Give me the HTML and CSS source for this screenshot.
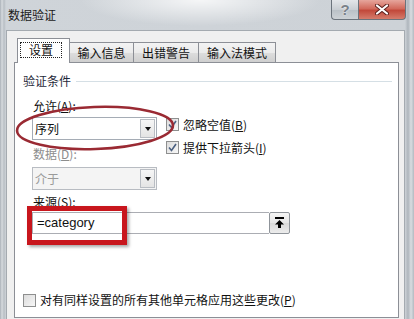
FILE: index.html
```html
<!DOCTYPE html>
<html lang="zh-CN">
<head>
  <meta charset="UTF-8" />
  <title>数据验证</title>
  <link rel="stylesheet" href="styles.css">
</head>
<body>
  <div class="window">
    <div class="titlebar">
      <span class="title">数据验证</span>
      <div class="caption-btns">
        <div class="cap help">?</div>
        <div class="cap close">
          <svg width="14" height="11" viewBox="0 0 14 11">
            <path d="M2 1.5 L12 9.5 M12 1.5 L2 9.5" stroke="#5a1f1c" stroke-width="4" stroke-linecap="round"/>
            <path d="M2 1.5 L12 9.5 M12 1.5 L2 9.5" stroke="#fff" stroke-width="2.2" stroke-linecap="round"/>
          </svg>
        </div>
      </div>
    </div>

    <div class="client">
      <div class="tabs">
        <div class="tab active"><span class="focus">设置</span></div>
        <div class="tab w2">输入信息</div>
        <div class="tab w3">出错警告</div>
        <div class="tab w4">输入法模式</div>
      </div>

      <div class="panel">
        <div class="group-title"><span>验证条件</span><i class="rule"></i></div>

        <div class="fields">
          <div class="top">
            <div class="left">
              <div class="label">允许(<u>A</u>):</div>
              <div class="combo">
                <span class="value">序列</span>
                <span class="drop"><i class="arrow"></i></span>
              </div>
              <div class="label disabled">数据(<u>D</u>):</div>
              <div class="combo off">
                <span class="value">介于</span>
                <span class="drop"><i class="arrow"></i></span>
              </div>
            </div>
            <div class="checks">
              <div class="check">
                <span class="box on"><svg width="9" height="9" viewBox="0 0 9 9"><path d="M1 4.5 L3.5 7.5 L8 1" fill="none" stroke="#4a5f80" stroke-width="1.6"/></svg></span>
                <span>忽略空值(<u>B</u>)</span>
              </div>
              <div class="check">
                <span class="box on"><svg width="9" height="9" viewBox="0 0 9 9"><path d="M1 4.5 L3.5 7.5 L8 1" fill="none" stroke="#4a5f80" stroke-width="1.6"/></svg></span>
                <span>提供下拉箭头(<u>I</u>)</span>
              </div>
            </div>
          </div>

          <div class="label src-label">来源(<u>S</u>):</div>
          <div class="source">
            <div class="input">=category</div>
            <div class="pick">
              <svg width="11" height="12" viewBox="0 0 11 12">
                <rect x="1" y="0" width="9" height="2" fill="#000"/>
                <path d="M5.5 3 L10 7.5 L7 7.5 L7 11 L4 11 L4 7.5 L1 7.5 Z" fill="#000"/>
              </svg>
            </div>
          </div>
        </div>

        <div class="check bottom">
          <span class="box"></span>
          <span>对有同样设置的所有其他单元格应用这些更改(<u>P</u>)</span>
        </div>

        <svg class="ring" width="176" height="60" viewBox="0 0 176 60">
          <ellipse cx="80" cy="26" rx="78" ry="21" transform="rotate(-2 80 26)" fill="none" stroke="#9a2a33" stroke-width="2.6"/>
        </svg>
        <div class="mark"></div>
      </div>
    </div>
  </div>
</body>
</html>
```

FILE: styles.css
```css
body {
  margin: 0;
  font-family: "Noto Sans CJK SC", "Noto Sans", sans-serif;
  font-size: 12px;
  color: #111;
}
.window {
  width: 414px;
  height: 319px;
  overflow: hidden;
  display: flex;
  flex-direction: column;
  background:
    radial-gradient(ellipse 120px 26px at 200px 0, rgba(255,255,255,0.8), rgba(255,255,255,0)),
    linear-gradient(90deg, #a9b0b7 0, #d7dbdf 2px, #b8bec4 4px, #cfd4d9 6px, #cdd2d7 405px, #aeb5bc 408px, #d9dde1 411px, #b3bac1 414px);
}
.titlebar {
  height: 30px;
  display: flex;
  align-items: flex-start;
  flex-shrink: 0;
}
.title {
  padding: 7px 0 0 8px;
  line-height: 16px;
  color: #1b1b1b;
}
.caption-btns {
  margin-left: auto;
  margin-right: 8px;
  display: flex;
}
.cap {
  height: 19px;
  border: 1px solid #6b737c;
  border-top: none;
  display: flex;
  align-items: center;
  justify-content: center;
}
.help {
  width: 26px;
  border-right: none;
  border-radius: 0 0 0 4px;
  background: linear-gradient(#e3e6e9, #c9ced3 50%, #b9c0c6 51%, #cdd2d6);
  color: #7b828a;
  font-family: "Liberation Sans", sans-serif;
  font-size: 15px;
  font-weight: bold;
  text-shadow: 0 0 2px #fff;
}
.close {
  width: 46px;
  border-radius: 0 0 4px 0;
  background: linear-gradient(#e6a69c, #d26a5c 45%, #c2493b 55%, #d57c6c);
}
.client {
  flex: 1;
  margin: 0 9px 0 6px;
  background: #f0f0f0;
  border: 1px solid #a4aab0;
  border-bottom: none;
}
.tabs {
  display: flex;
  align-items: flex-end;
  height: 24px;
  margin: 7px 0 0 10px;
}
.tab {
  height: 20px;
  box-sizing: border-box;
  border: 1px solid #8c8f96;
  border-bottom: none;
  margin-left: -1px;
  background: linear-gradient(#f3f3f3, #ebebeb 50%, #dddddd 51%, #cfcfcf);
  display: flex;
  align-items: center;
  justify-content: center;
  line-height: 14px;
}
.tab.active {
  width: 53px;
  height: 25px;
  margin-bottom: -1px;
  margin-left: 0;
  background: #fff;
  position: relative;
  z-index: 1;
  justify-content: flex-start;
  padding: 0 0 3px 2px;
}
.focus {
  border: 1px dotted #222;
  padding: 0 8px;
  line-height: 14px;
}
.w2 { width: 65px; }
.w3 { width: 66px; }
.w4 { width: 78px; }
.panel {
  width: 385px;
  height: 256px;
  box-sizing: border-box;
  margin-left: 7px;
  border: 1px solid #8c8f96;
  background: #fff;
  position: relative;
  display: flex;
  flex-direction: column;
  padding: 11px 0 10px 8px;
}
.group-title {
  display: flex;
  align-items: center;
  gap: 5px;
  line-height: 14px;
  color: #1f2a3a;
}
.rule {
  flex: 1;
  margin-right: 6px;
  border-top: 1px solid #d5dfe5;
}
.fields {
  margin: 11px 0 0 9px;
}
.top {
  display: flex;
}
.left {
  width: 125px;
}
.label {
  line-height: 14px;
  padding-left: 1px;
}
.label.disabled {
  color: #8d8d8d;
  margin-top: 7px;
}
.combo {
  margin-top: 4px;
  height: 23px;
  box-sizing: border-box;
  border: 1px solid #a5acb5;
  background: #fff;
  display: flex;
  align-items: center;
}
.combo.off {
  margin-top: 6px;
  background: #f4f4f4;
  border-color: #b8bcc2;
  color: #9a9a9a;
}
.value {
  flex: 1;
  padding-left: 2px;
}
.drop {
  width: 15px;
  height: 19px;
  margin-right: 1px;
  box-sizing: border-box;
  border: 1px solid #b9bdc3;
  background: linear-gradient(#f6f6f6, #e4e4e4);
  display: flex;
  align-items: center;
  justify-content: center;
}
.arrow {
  width: 0;
  height: 0;
  border-left: 3.5px solid transparent;
  border-right: 3.5px solid transparent;
  border-top: 4px solid #111;
}
.checks {
  margin-left: 9px;
  padding-top: 14px;
}
.check {
  height: 23px;
  display: flex;
  align-items: center;
  gap: 4px;
  line-height: 14px;
}
.box {
  width: 13px;
  height: 13px;
  box-sizing: border-box;
  border: 1px solid #8e8f8f;
  background: linear-gradient(135deg, #dcdcdc, #f7f7f7);
  display: flex;
  align-items: center;
  justify-content: center;
}
.src-label {
  margin-top: 5px;
}
.source {
  margin-top: 3px;
  width: 258px;
  height: 22px;
  display: flex;
}
.input {
  flex: 1;
  box-sizing: border-box;
  border: 1px solid #abadb3;
  border-right: none;
  padding-left: 4px;
  font-family: "Liberation Sans", sans-serif;
  font-size: 13px;
  line-height: 20px;
}
.pick {
  width: 21px;
  box-sizing: border-box;
  border: 1px solid #8f949a;
  border-radius: 2px;
  background: linear-gradient(#f5f5f5, #e6e6e6 50%, #dadada 51%, #ececec);
  display: flex;
  align-items: center;
  justify-content: center;
}
.check.bottom {
  margin-top: auto;
  height: 14px;
}
.ring {
  position: absolute;
  left: 0;
  top: 39px;
}
.mark {
  position: absolute;
  left: 12px;
  top: 143px;
  width: 100px;
  height: 39px;
  box-sizing: border-box;
  border: 5px solid #c8161d;
  box-shadow: 2px 2px 3px rgba(0,0,0,0.35);
}
```
